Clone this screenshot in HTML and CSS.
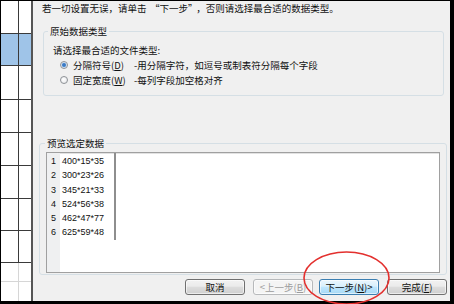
FILE: index.html
```html
<!DOCTYPE html>
<html lang="zh-CN">
<head>
  <meta charset="UTF-8" />
  <meta name="viewport" content="width=device-width, initial-scale=1.0" />
  <title>文本导入向导 - 第 1 步</title>
  <link rel="stylesheet" href="styles.css">
</head>
<body>
  <div class="sheet">
    <div class="row r0"><div class="cell"></div><div class="cell"></div></div>
    <div class="row r1 sel"><div class="cell"></div><div class="cell"></div></div>
    <div class="row r2"><div class="cell"></div><div class="cell"></div></div>
    <div class="row r3"><div class="cell"></div><div class="cell"></div></div>
    <div class="row r4"><div class="cell"></div><div class="cell"></div></div>
    <div class="row r5"><div class="cell"></div><div class="cell"></div></div>
    <div class="row r6"><div class="cell"></div><div class="cell"></div></div>
    <div class="row r7"><div class="cell"></div><div class="cell"></div></div>
    <div class="row r8 plain"><div class="cell"></div><div class="cell"></div></div>
    <div class="row r9 plain"><div class="cell"></div><div class="cell"></div></div>
  </div>

  <div class="dialog">
    <p class="intro">若一切设置无误，请单击<span class="q">“下一步”</span>，否则请选择最合适的数据类型。</p>

    <fieldset class="group group-type">
      <legend>原始数据类型</legend>
      <div class="hint">请选择最合适的文件类型:</div>
      <label class="opt">
        <span class="radio checked"></span>
        <span class="opt-name">分隔符号(<u>D</u>)</span>
        <span>-用分隔字符，如逗号或制表符分隔每个字段</span>
      </label>
      <label class="opt">
        <span class="radio"></span>
        <span class="opt-name">固定宽度(<u>W</u>)</span>
        <span>-每列字段加空格对齐</span>
      </label>
    </fieldset>

    <fieldset class="group group-preview">
      <legend>预览选定数据</legend>
      <div class="preview">
        <div class="nums">
          <div>1</div><div>2</div><div>3</div><div>4</div><div>5</div><div>6</div>
        </div>
        <div class="data">
          <div>400*15*35</div>
          <div>300*23*26</div>
          <div>345*21*33</div>
          <div>524*56*38</div>
          <div>462*47*77</div>
          <div>625*59*48</div>
        </div>
      </div>
    </fieldset>

    <div class="buttons">
      <button class="btn">取消</button>
      <div class="nav">
        <button class="btn" disabled>&lt;上一步(<u>B</u>)</button>
        <button class="btn btn-default">下一步(<u>N</u>)&gt;</button>
      </div>
      <button class="btn">完成(<u>F</u>)</button>
    </div>
  </div>

  <!-- red annotation ring drawn over the screenshot -->
  <svg class="mark" width="454" height="304" viewBox="0 0 454 304">
    <ellipse cx="346.5" cy="278" rx="42.5" ry="26" fill="none" stroke="#e3302e" stroke-width="1.6" />
  </svg>
</body>
</html>
```

FILE: styles.css
```css
body {
  margin: 0;
  width: 454px;
  height: 304px;
  box-sizing: border-box;
  padding: 1px 4px 3px 1px;
  background: #000;
  display: flex;
  position: relative;
  overflow: hidden;
  font-family: "Noto Sans CJK SC", "Noto Sans", sans-serif;
  font-size: 9.5px;
  color: #111;
}

/* spreadsheet strip on the left */
.sheet {
  width: 30px;
  background: #fff;
  border-right: 2px solid #555;
  display: flex;
  flex-direction: column;
}
.row {
  display: flex;
  border-bottom: 1px solid #3a3a3a;
}
.row .cell:first-child {
  width: 17px;
  border-right: 1px solid #3a3a3a;
}
.row .cell:last-child {
  flex: 1;
}
.r0 { height: 32px; }
.r1 { height: 31px; }
.r2 { height: 33px; }
.r3, .r4, .r5 { height: 32px; }
.r6, .r7 { height: 31px; }
.r8 { height: 18px; }
.r9 { flex: 1; border-bottom: none; }
.sel .cell {
  background: #9fc4e8;
}
.plain {
  border-bottom-color: #d6d6d6;
}
.plain .cell:first-child {
  border-right-color: #d6d6d6;
}

/* wizard dialog */
.dialog {
  flex: 1;
  background: #f0f0f0;
  display: flex;
  flex-direction: column;
  padding-top: 1px;
}
.intro {
  margin: 0 0 0 9px;
  line-height: 12px;
  white-space: nowrap;
}
/* full-width quotes, as the dialog font draws them */
.intro .q {
  padding: 0 3.5px;
}
.group {
  border: 1px solid #d5dfe5;
  border-radius: 3px;
  padding: 0;
  margin: 0;
  min-width: 0;
}
.group legend {
  margin-left: 5px;
  padding: 0 2px;
  line-height: 12px;
}
.group-type {
  margin: 11px 6px 0 10px;
  padding-bottom: 8px;
}
.group-type legend {
  margin-left: 4px;
}
.hint {
  margin: 7px 0 0 9px;
  line-height: 13px;
}
.opt {
  display: flex;
  align-items: center;
  height: 15px;
  padding-left: 16px;
  white-space: nowrap;
}
.radio {
  width: 8px;
  height: 8px;
  box-sizing: border-box;
  border: 1px solid #8d9196;
  border-radius: 50%;
  background: radial-gradient(circle at 40% 40%, #fff, #e2e4e6);
  margin-right: 5px;
}
.radio.checked {
  background: radial-gradient(circle, #2f6bb4 0, #4d8ad0 1.6px, #d9e6f3 2.6px, #f4f6f8 100%);
}
.opt-name {
  width: 61px;
}

.group-preview {
  margin: 41px 3px 0 6px;
}
.preview {
  margin: 3px 6px 1px;
  height: 121px;
  box-sizing: border-box;
  background: #fff;
  border: 1px solid #a0a0a0;
  box-shadow: inset 1px 1px 0 #e2e2e2;
  display: flex;
  align-items: flex-start;
  font-family: "Liberation Sans", Arial, sans-serif;
  font-size: 9px;
  line-height: 14.3px;
}
.nums {
  align-self: stretch;
  width: 13px;
  background: #eff0f1;
  text-align: center;
  padding-top: 1px;
}
.data {
  width: 56px;
  box-sizing: border-box;
  padding: 1px 0 0 2px;
  border-right: 2px solid #8e8e8e;
}

/* bottom buttons */
.buttons {
  display: flex;
  justify-content: flex-end;
  gap: 8px;
  margin: 4px 3px 0 0;
}
.nav {
  display: flex;
  gap: 6px;
}
.btn {
  width: 60px;
  height: 16px;
  box-sizing: border-box;
  padding: 0;
  font: inherit;
  line-height: 14px;
  color: #111;
  border: 1px solid #707070;
  border-radius: 3px;
  background: linear-gradient(#f2f2f2, #ebebeb 45%, #dddddd 50%, #cfcfcf);
  box-shadow: inset 0 0 0 1px rgba(255, 255, 255, 0.6);
}
.btn:disabled {
  color: #9c9c9c;
  border-color: #b7b9bb;
  background: #f4f4f4;
}
.btn-default {
  border-color: #3c7fb1;
  background: linear-gradient(#eaf6fd, #d9f0fc 45%, #bee6fd 50%, #a7d9f5);
}

.mark {
  position: absolute;
  left: 0;
  top: 0;
  pointer-events: none;
}
```
